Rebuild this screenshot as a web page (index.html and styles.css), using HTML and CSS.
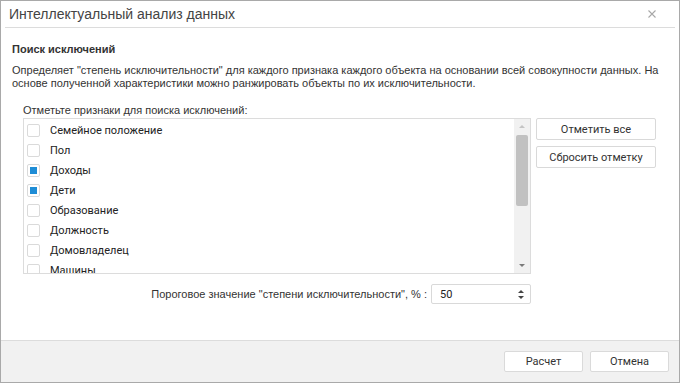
FILE: index.html
```html
<!DOCTYPE html>
<html lang="ru">
<head>
<meta charset="utf-8">
<title>Интеллектуальный анализ данных</title>
<link rel="stylesheet" href="styles.css">
</head>
<body>
<div class="dialog">
  <div class="titlebar">
    <span class="title">Интеллектуальный анализ данных</span>
    <span class="close">
      <svg width="8" height="8" viewBox="0 0 8 8"><path d="M0.5 0.5 L7.5 7.5 M7.5 0.5 L0.5 7.5" stroke="#a8a8a8" stroke-width="1.1" fill="none"/></svg>
    </span>
  </div>
  <div class="content">
    <div class="heading">Поиск исключений</div>
    <p class="desc">Определяет "степень исключительности" для каждого признака каждого объекта на основании всей совокупности данных. На основе полученной характеристики можно ранжировать объекты по их исключительности.</p>
    <div class="label">Отметьте признаки для поиска исключений:</div>
    <div class="listrow">
      <div class="listbox">
        <ul class="items">
          <li><span class="cb"></span>Семейное положение</li>
          <li><span class="cb"></span>Пол</li>
          <li><span class="cb checked"></span>Доходы</li>
          <li><span class="cb checked"></span>Дети</li>
          <li><span class="cb"></span>Образование</li>
          <li><span class="cb"></span>Должность</li>
          <li><span class="cb"></span>Домовладелец</li>
          <li><span class="cb"></span>Машины</li>
        </ul>
        <div class="scrollbar">
          <span class="arrow up"></span>
          <span class="thumb"></span>
          <span class="arrow down"></span>
        </div>
      </div>
      <div class="sidebtns">
        <button class="btn">Отметить все</button>
        <button class="btn">Сбросить отметку</button>
      </div>
    </div>
    <div class="threshold">
      <span class="tlabel">Пороговое значение "степени исключительности", % :</span>
      <div class="spin">
        <span class="val">50</span>
        <span class="spinarrows"><span class="arrow up dark"></span><span class="arrow down dark"></span></span>
      </div>
    </div>
  </div>
  <div class="footer">
    <button class="btn fbtn">Расчет</button>
    <button class="btn fbtn">Отмена</button>
  </div>
</div>
</body>
</html>
```
FILE: styles.css
```css
* { box-sizing: border-box; }
html, body { margin: 0; padding: 0; background: #fff; }
body { font-family: "Liberation Sans", Arial, sans-serif; color: #333; }
.dialog {
  width: 680px; height: 383px;
  border: 1px solid #a9a9a9;
  display: flex; flex-direction: column;
  background: #fff;
}
.titlebar {
  height: 27px;
  margin: 0 4px;
  padding: 0 4px 0 4px;
  border-bottom: 1px solid #dcdcdc;
  display: flex; align-items: center; justify-content: space-between;
}
.title { font-size: 14px; color: #444; }
.close { display: flex; margin-right: 15px; }
.content { flex: 1; padding: 15px 11px 0 11px; }
.heading { font-size: 11px; font-weight: bold; color: #333; line-height: 13px; }
.desc { margin: 8px 0 0 0; font-size: 11px; line-height: 13px; color: #333; }
.label { margin: 14px 0 0 11px; font-size: 11px; line-height: 13px; color: #333; }
.listrow { display: flex; margin: 1px 0 0 11px; gap: 5px; }
.listbox {
  width: 508px; height: 156px;
  border: 1px solid #dcdcdc;
  display: flex; overflow: hidden;
}
.items { list-style: none; margin: 0; padding: 1px 0 0 0; flex: 1; }
.items li {
  height: 20px; display: flex; align-items: center;
  font-family: Roboto, "Liberation Sans", sans-serif; font-size: 11px; color: #222;
  padding-left: 3px;
}
.cb {
  width: 13px; height: 13px; border: 1px solid #dadada; border-radius: 2px;
  margin-right: 10px; display: flex; align-items: center; justify-content: center;
  background: #fff;
}
.cb.checked::after { content: ""; width: 7px; height: 7px; background: #1f8dd6; }
.scrollbar {
  width: 16px; background: #f1f1f1;
  display: flex; flex-direction: column; align-items: center;
}
.arrow { width: 0; height: 0; border-left: 3px solid transparent; border-right: 3px solid transparent; }
.arrow.up { border-bottom: 3px solid #c4c4c4; margin-top: 6px; }
.arrow.down { border-top: 3px solid #7a7a7a; margin-top: auto; margin-bottom: 6px; }
.thumb { width: 12px; height: 71px; background: #c1c1c1; border-radius: 2px; margin-top: 7px; }
.sidebtns { display: flex; flex-direction: column; gap: 6px; }
.btn {
  font-family: Roboto, "Liberation Sans", sans-serif; font-size: 11px; color: #333;
  background: #fff; border: 1px solid #d9d9d9; border-radius: 2px;
  width: 120px; height: 22px; padding: 0; cursor: pointer;
}
.threshold { display: flex; align-items: center; justify-content: flex-end; width: 519px; margin-top: 10px; gap: 4px; }
.tlabel { font-size: 11px; color: #333; }
.spin {
  width: 100px; height: 20px; border: 1px solid #d9d9d9; border-radius: 2px;
  display: flex; align-items: center; justify-content: space-between; padding: 0 6px 0 8px;
  font-family: Roboto, "Liberation Sans", sans-serif; font-size: 11px; color: #222;
}
.spinarrows { display: flex; flex-direction: column; gap: 3px; }
.spinarrows .arrow.up { border-bottom: 3px solid #444; margin: 0; }
.spinarrows .arrow.down { border-top: 3px solid #444; margin: 0; }
.footer {
  height: 42px; background: #f1f1f1; border-top: 1px solid #dcdcdc;
  display: flex; align-items: center; justify-content: flex-end; gap: 7px; padding-right: 10px;
}
.fbtn { width: 79px; height: 21px; border-color: #dadada; }
```
